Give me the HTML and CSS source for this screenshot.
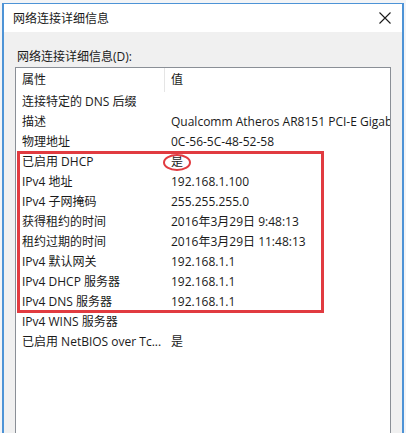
FILE: index.html
```html
<!DOCTYPE html>
<html lang="zh-CN">

<head>
  <meta charset="UTF-8">
  <meta name="viewport" content="width=device-width, initial-scale=1.0">
  <title>网络连接详细信息</title>
  <link rel="stylesheet" href="styles.css">
</head>

<body>
  <div class="window">
    <div class="title-bar">
      <span class="title">网络连接详细信息</span>
      <svg class="close" width="12" height="12" viewBox="0 0 12 12">
        <path d="M0.5 0.5 L11.5 11.5 M11.5 0.5 L0.5 11.5" stroke="#1a1a1a" stroke-width="1.1" fill="none"/>
      </svg>
    </div>

    <div class="content">
      <p class="label">网络连接详细信息(D):</p>
      <div class="listbox">
        <div class="list-head">
          <div class="col-name">属性</div>
          <div class="col-value">值</div>
        </div>
        <div class="list-body">
          <div class="row"><div class="col-name">连接特定的 DNS 后缀</div><div class="col-value"></div></div>
          <div class="row"><div class="col-name">描述</div><div class="col-value">Qualcomm Atheros AR8151 PCI-E Gigab</div></div>
          <div class="row"><div class="col-name">物理地址</div><div class="col-value">0C-56-5C-48-52-58</div></div>
          <div class="row"><div class="col-name">已启用 DHCP</div><div class="col-value">是</div></div>
          <div class="row"><div class="col-name">IPv4 地址</div><div class="col-value">192.168.1.100</div></div>
          <div class="row"><div class="col-name">IPv4 子网掩码</div><div class="col-value">255.255.255.0</div></div>
          <div class="row"><div class="col-name">获得租约的时间</div><div class="col-value">2016年3月29日 9:48:13</div></div>
          <div class="row"><div class="col-name">租约过期的时间</div><div class="col-value">2016年3月29日 11:48:13</div></div>
          <div class="row"><div class="col-name">IPv4 默认网关</div><div class="col-value">192.168.1.1</div></div>
          <div class="row"><div class="col-name">IPv4 DHCP 服务器</div><div class="col-value">192.168.1.1</div></div>
          <div class="row"><div class="col-name">IPv4 DNS 服务器</div><div class="col-value">192.168.1.1</div></div>
          <div class="row"><div class="col-name">IPv4 WINS 服务器</div><div class="col-value"></div></div>
          <div class="row"><div class="col-name">已启用 NetBIOS over Tc...</div><div class="col-value">是</div></div>

          <!-- annotations drawn over the list -->
          <div class="mark-box"></div>
          <div class="mark-circle"></div>
        </div>
      </div>
    </div>
  </div>
</body>

</html>
```

FILE: styles.css
```css
/* Basic Reset */
* {
  margin: 0;
  padding: 0;
  box-sizing: border-box;
}

body {
  font-family: "Open Sans", "Noto Sans CJK SC", sans-serif;
  font-size: 12px;
  color: #1a1a1a;
  background-color: #f3f4f6;
  height: 433px;
  overflow: hidden;
}

/* Window frame */
.window {
  margin: 3px 0 0 2px;
  width: 402px;
  height: 430px;
  border: 1px solid #4d93d6;
  border-left-width: 2px;
  border-right-width: 2px;
  border-bottom: none;
  background-color: #f0f0f0;
}

.title-bar {
  height: 28px;
  background-color: #fff;
  display: flex;
  align-items: center;
  justify-content: space-between;
  padding: 0 11px 0 9px;
}

.title {
  font-size: 12px;
  color: #1a1a1a;
}

.close {
  display: block;
}

/* Content */
.content {
  padding: 17px 11px 0 11px;
}

.label {
  height: 16px;
  line-height: 16px;
  margin-bottom: 2px;
  padding-left: 2px;
}

.listbox {
  background-color: #fff;
  border: 1px solid #8a8f96;
  border-bottom: none;
  height: 366px;
  overflow: hidden;
}

.list-head,
.row {
  display: flex;
  white-space: nowrap;
}

.list-head {
  height: 24px;
  line-height: 24px;
}

.list-head .col-name {
  border-right: 1px solid #e5e5e5;
}

.col-name {
  width: 149px;
  padding-left: 6px;
  flex-shrink: 0;
  overflow: hidden;
}

.col-value {
  padding-left: 6px;
  flex: 1;
  overflow: hidden;
}

.list-body {
  position: relative;
}

.row {
  height: 20px;
  line-height: 20px;
}

/* Red annotations */
.mark-box {
  position: absolute;
  left: 1px;
  top: 59px;
  width: 307px;
  height: 162px;
  border: 3px solid #e13b40;
}

.mark-circle {
  position: absolute;
  left: 147px;
  top: 62px;
  width: 28px;
  height: 17px;
  border: 2px solid #e13b40;
  border-radius: 50%;
}
```
